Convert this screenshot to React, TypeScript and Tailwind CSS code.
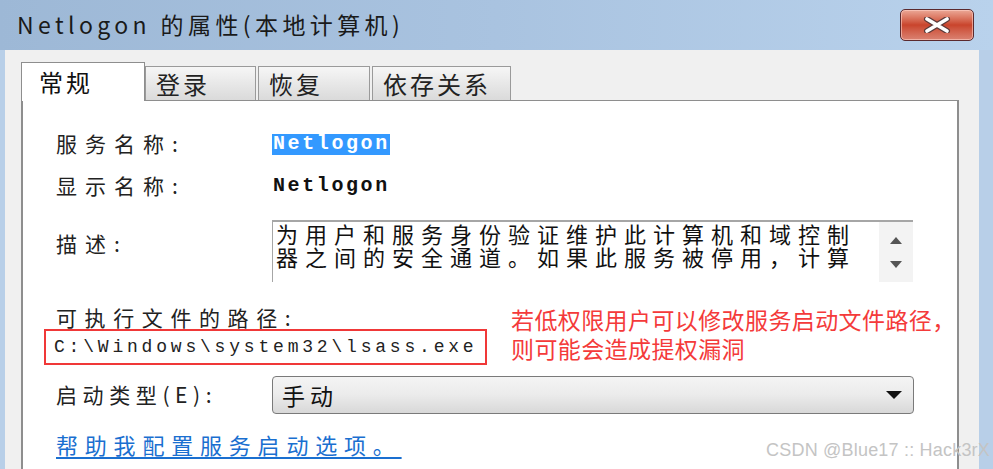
import React from "react";

const cjk = "font-['Noto_Sans_CJK_SC','Noto_Sans',sans-serif]";

function Tab({ label, active }: { label: string; active?: boolean }) {
  if (active) {
    return (
      <div className="h-[39px] w-[124px] -mb-px z-10 bg-white border border-b-0 border-[#8e8e8e] flex items-center pl-[17px] text-[24px] text-[#111] tracking-[3px]">
        {label}
      </div>
    );
  }
  return (
    <div className="h-[34px] bg-gradient-to-b from-[#f6f6f6] to-[#dadada] border border-b-0 border-[#9a9a9a] flex items-center pl-[10px] pr-[8px] text-[24px] text-[#222] tracking-[3px] whitespace-nowrap">
      {label}
    </div>
  );
}

export default function App() {
  return (
    <div className={`w-[993px] h-[469px] overflow-hidden relative flex flex-col ${cjk}`}>
      {/* title bar */}
      <div className="h-[50px] shrink-0 flex items-center justify-between bg-gradient-to-r from-[#9db8d6] via-[#a9c3e0] to-[#b9d2ec] pl-[17px] pr-[19px]">
        <div className="text-[23px] text-[#1a1a1a] tracking-[4.4px] pb-[2px] whitespace-nowrap">
          Netlogon 的属性(本地计算机)
        </div>
        <div className="w-[74px] h-[32px] rounded-[5px] border border-[#5b2a2e] bg-gradient-to-b from-[#eba897] via-[#c9442c] to-[#da8272] flex items-center justify-center shadow-[inset_0_0_0_1px_rgba(255,210,200,0.6)]">
          <svg width="28" height="16" viewBox="0 0 28 16">
            <path d="M4 2 L24 14 M24 2 L4 14" stroke="#5a3a3a" strokeWidth="6" strokeLinecap="round" />
            <path d="M4 2 L24 14 M24 2 L4 14" stroke="#ffffff" strokeWidth="3.6" strokeLinecap="round" />
          </svg>
        </div>
      </div>

      {/* window body */}
      <div className="flex-1 flex bg-[#b8cfe8] min-w-0">
        <div className="w-[5px] shrink-0" />
        <div className="flex-1 min-w-0 bg-[#f0f0f0] pt-[12px] pl-[16px] pr-[20px] flex flex-col">
          <div className="flex items-end gap-[2px]">
            <Tab label="常规" active />
            <div className="-ml-[2px] w-[111px]"><Tab label="登录" /></div>
            <div className="w-[112px]"><Tab label="恢复" /></div>
            <div className="w-[139px]"><Tab label="依存关系" /></div>
          </div>

          {/* panel */}
          <div className="flex-1 min-w-0 bg-white border-l-[2px] border-r-[2px] border-t border-[#8e8e8e] pl-[33px] relative">
            <div className="h-[31px]" />
            <div className="flex h-[24px] items-center">
              <div className="w-[216px] text-[21px] text-[#222] tracking-[8px] whitespace-nowrap">服务名称:</div>
              <div className="bg-[#3399ff] text-white font-['Liberation_Mono',monospace] font-bold text-[20px] tracking-[2.6px] leading-[20px] h-[21px] pl-[1px]">
                Netlogon
              </div>
            </div>

            <div className="flex h-[24px] items-center mt-[18px]">
              <div className="w-[216px] text-[21px] text-[#222] tracking-[8px] whitespace-nowrap">显示名称:</div>
              <div className="text-[#111] font-['Liberation_Mono',monospace] font-bold text-[20px] tracking-[2.6px] pl-[1px]">
                Netlogon
              </div>
            </div>

            <div className="flex mt-[22px] h-[62px]">
              <div className="w-[216px] text-[21px] text-[#222] tracking-[8px] pt-[8px]">描述:</div>
              <div className="w-[641px] flex border-t-[2px] border-l border-[#a6a6a6]">
                <div className="flex-1 pl-[3px] text-[22px] leading-[23px] text-[#111] tracking-[7px] whitespace-nowrap">
                  <div>为用户和服务身份验证维护此计算机和域控制</div>
                  <div>器之间的安全通道。如果此服务被停用，计算</div>
                </div>
                <div className="w-[34px] bg-[#f3f3f3] flex flex-col items-center justify-around py-[6px]">
                  <svg width="12" height="7" viewBox="0 0 12 7"><path d="M0 7 L6 0 L12 7 Z" fill="#555" /></svg>
                  <svg width="12" height="7" viewBox="0 0 12 7"><path d="M0 0 L12 0 L6 7 Z" fill="#555" /></svg>
                </div>
              </div>
            </div>

            <div className="flex mt-[25px]">
              <div className="flex flex-col -ml-[12px] shrink-0">
                <div className="pl-[12px] h-[22px] flex items-center text-[21px] text-[#222] tracking-[7.6px] whitespace-nowrap">可执行文件的路径:</div>
                <div className="w-[443px] h-[36px] border-[2px] border-[#f03838] flex items-center pl-[8px] font-['Liberation_Mono',monospace] text-[18px] text-[#222] tracking-[3.8px] whitespace-nowrap">
                  C:\Windows\system32\lsass.exe
                </div>
              </div>
              <div className="ml-[24px] text-[23px] leading-[29px] text-[#f43a3a] whitespace-nowrap -mt-[2px] tracking-[0.4px]">
                <div>若低权限用户可以修改服务启动文件路径，</div>
                <div>则可能会造成提权漏洞</div>
              </div>
            </div>

            <div className="flex h-[38px] items-center mt-[11px]">
              <div className="w-[216px] text-[21px] text-[#222] tracking-[5.6px] whitespace-nowrap">启动类型(E):</div>
              <div className="w-[642px] h-[38px] rounded-[4px] border border-[#7a7a7a] bg-gradient-to-b from-[#f4f4f4] via-[#ebebeb] to-[#d8d8d8] flex items-center justify-between pl-[9px] pr-[11px]">
                <span className="text-[23px] text-[#111] tracking-[5px]">手动</span>
                <svg width="16" height="8" viewBox="0 0 16 8"><path d="M0 0 L16 0 L8 8 Z" fill="#111" /></svg>
              </div>
            </div>

            <div className="mt-[18px] h-[24px] flex items-center">
              <span className="text-[22px] text-[#1a6fd0] underline underline-offset-[3px] tracking-[6.8px] whitespace-nowrap">帮助我配置服务启动选项。</span>
            </div>
          </div>
        </div>
        <div className="w-[14px] shrink-0" />
      </div>

      <div className="absolute right-[3px] bottom-[5px] font-['Liberation_Sans',sans-serif] text-[18px] text-[#c4c4c4] tracking-[0.2px]">
        CSDN @Blue17 :: Hack3rX
      </div>
    </div>
  );
}
